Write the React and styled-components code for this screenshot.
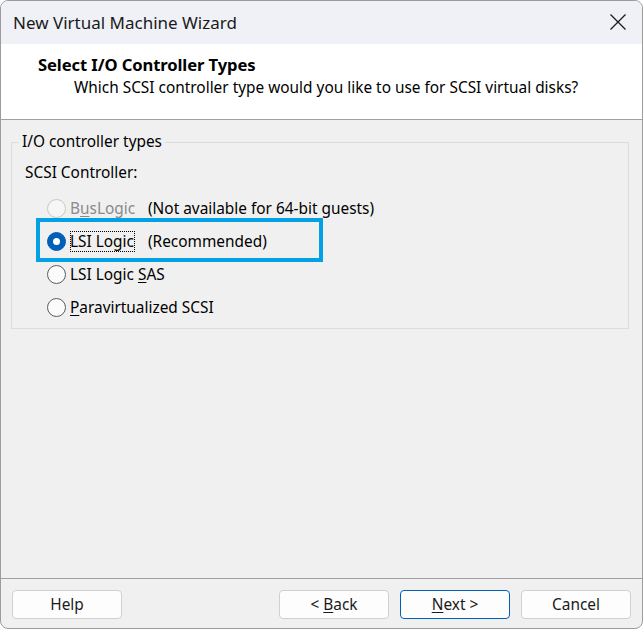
import styled, { createGlobalStyle } from "styled-components";

const GlobalStyle = createGlobalStyle`
  html, body {
    margin: 0;
    padding: 0;
    background: #ffffff;
  }
  body {
    font-family: "Noto Sans", "Open Sans", sans-serif;
    color: #000;
  }
`;

const controllers = [
  { id: "bus", label: "BusLogic", key: 1, note: "(Not available for 64-bit guests)", disabled: true },
  { id: "lsi", label: "LSI Logic", key: -1, note: "(Recommended)", checked: true, focus: true },
  { id: "sas", label: "LSI Logic SAS", key: 10 },
  { id: "pv", label: "Paravirtualized SCSI", key: 0 },
];

const Mnemonic = ({ text, at }) => {
  if (at < 0) return text;
  return (
    <>
      {text.slice(0, at)}
      <u>{text[at]}</u>
      {text.slice(at + 1)}
    </>
  );
};

const App = () => {
  return (
    <>
      <GlobalStyle />
      <Window>
        <TitleBar>
          <span>New Virtual Machine Wizard</span>
          <CloseButton aria-label="Close">
            <svg width="18" height="18" viewBox="0 0 18 18">
              <path d="M1.5 1.5 L16.5 16.5 M16.5 1.5 L1.5 16.5" stroke="#1a1a1a" strokeWidth="1.3" fill="none" />
            </svg>
          </CloseButton>
        </TitleBar>
        <Header>
          <h1>Select I/O Controller Types</h1>
          <p>Which SCSI controller type would you like to use for SCSI virtual disks?</p>
        </Header>
        <Body>
          <Group>
            <legend>I/O controller types</legend>
            <Caption>SCSI Controller:</Caption>
            <Options>
              {controllers.map((c) => (
                <Option key={c.id} $disabled={c.disabled}>
                  <Radio $checked={c.checked} $disabled={c.disabled} />
                  <Label $focus={c.focus}>
                    {c.key >= 0 ? <Mnemonic text={c.label} at={c.key} /> : c.label}
                  </Label>
                  {c.note && <Note>{c.note}</Note>}
                </Option>
              ))}
              <Highlight />
            </Options>
          </Group>
        </Body>
        <Footer>
          <Button>Help</Button>
          <Spacer />
          <Button>
            &lt; <u>B</u>ack
          </Button>
          <Button $primary>
            <u>N</u>ext &gt;
          </Button>
          <Button>Cancel</Button>
        </Footer>
      </Window>
    </>
  );
};

export default App;

const Window = styled.div`
  box-sizing: border-box;
  width: 643px;
  height: 629px;
  border: 1px solid #9c9c9c;
  border-radius: 8px;
  background: #f0f0f0;
  display: flex;
  flex-direction: column;
  overflow: hidden;
`;

const TitleBar = styled.div`
  height: 43px;
  flex: none;
  display: flex;
  align-items: center;
  justify-content: space-between;
  padding-left: 12px;
  padding-bottom: 1px;
  box-sizing: border-box;
  background: #eff1f7;
  font-size: 17px;
  color: #1a1a1a;
`;

const CloseButton = styled.div`
  width: 48px;
  height: 42px;
  display: flex;
  align-items: center;
  justify-content: center;
`;

const Header = styled.div`
  height: 76px;
  flex: none;
  background: #ffffff;
  border-bottom: 1px solid #a0a0a0;
  padding: 9px 0 0 37px;
  box-sizing: border-box;
  h1 {
    margin: 0;
    font-size: 16.6px;
    font-weight: 700;
    line-height: 24px;
    letter-spacing: -0.1px;
  }
  p {
    margin: 0;
    padding-left: 36px;
    font-size: 15.4px;
    line-height: 22px;
  }
`;

const Body = styled.div`
  flex: 1;
  padding: 12px 13px 0 10px;
  font-size: 15.4px;
`;

const Group = styled.fieldset`
  margin: 0;
  padding: 0 0 10px 13px;
  border: 1px solid #dcdcdc;
  legend {
    padding: 0 3px;
    margin-left: -6px;
    line-height: 20px;
  }
`;

const Caption = styled.div`
  line-height: 22px;
  margin-top: 10px;
`;

const Options = styled.div`
  position: relative;
  margin-top: 13px;
  margin-left: 22px;
  display: grid;
  row-gap: 11px;
`;

const Option = styled.div`
  display: grid;
  grid-template-columns: 24px 77px auto;
  align-items: center;
  height: 22px;
  color: ${(p) => (p.$disabled ? "#8a8a8a" : "#000")};
`;

const Radio = styled.span`
  box-sizing: border-box;
  width: 19px;
  height: 19px;
  border-radius: 50%;
  position: relative;
  border: 1px solid ${(p) => (p.$disabled ? "#c9c9c9" : p.$checked ? "#005fb8" : "#5c5c5c")};
  background: ${(p) => (p.$checked ? "#005fb8" : p.$disabled ? "#f6f6f6" : "#fbfbfb")};
  &::after {
    content: "";
    display: ${(p) => (p.$checked ? "block" : "none")};
    position: absolute;
    left: 5px;
    top: 5px;
    width: 7px;
    height: 7px;
    border-radius: 50%;
    background: #ffffff;
  }
`;

const Label = styled.span`
  white-space: nowrap;
  justify-self: start;
  outline: ${(p) => (p.$focus ? "1px dotted #000" : "none")};
  outline-offset: -1px;
  padding: 0 1px 0 0;
  margin-left: -1px;
  u {
    text-decoration-thickness: 1px;
    text-underline-offset: 2px;
  }
`;

const Note = styled.span`
  color: #000;
  white-space: nowrap;
`;

const Highlight = styled.div`
  position: absolute;
  left: -11px;
  top: 21px;
  width: 287px;
  height: 44px;
  box-sizing: border-box;
  border: 4px solid #03a1e4;
  pointer-events: none;
`;

const Footer = styled.div`
  flex: none;
  height: 50px;
  box-sizing: border-box;
  border-top: 1px solid #a0a0a0;
  display: flex;
  align-items: flex-start;
  gap: 11px;
  padding: 11px 11px 0 11px;
`;

const Spacer = styled.div`
  flex: 1;
`;

const Button = styled.button`
  box-sizing: border-box;
  width: 110px;
  height: 29px;
  background: #fdfdfd;
  border: 1px solid ${(p) => (p.$primary ? "#005fb8" : "#d0d0d0")};
  border-radius: 4px;
  font-family: "Noto Sans", "Open Sans", sans-serif;
  font-size: 15.4px;
  color: #1a1a1a;
  padding: 0;
  u {
    text-underline-offset: 2px;
  }
`;
